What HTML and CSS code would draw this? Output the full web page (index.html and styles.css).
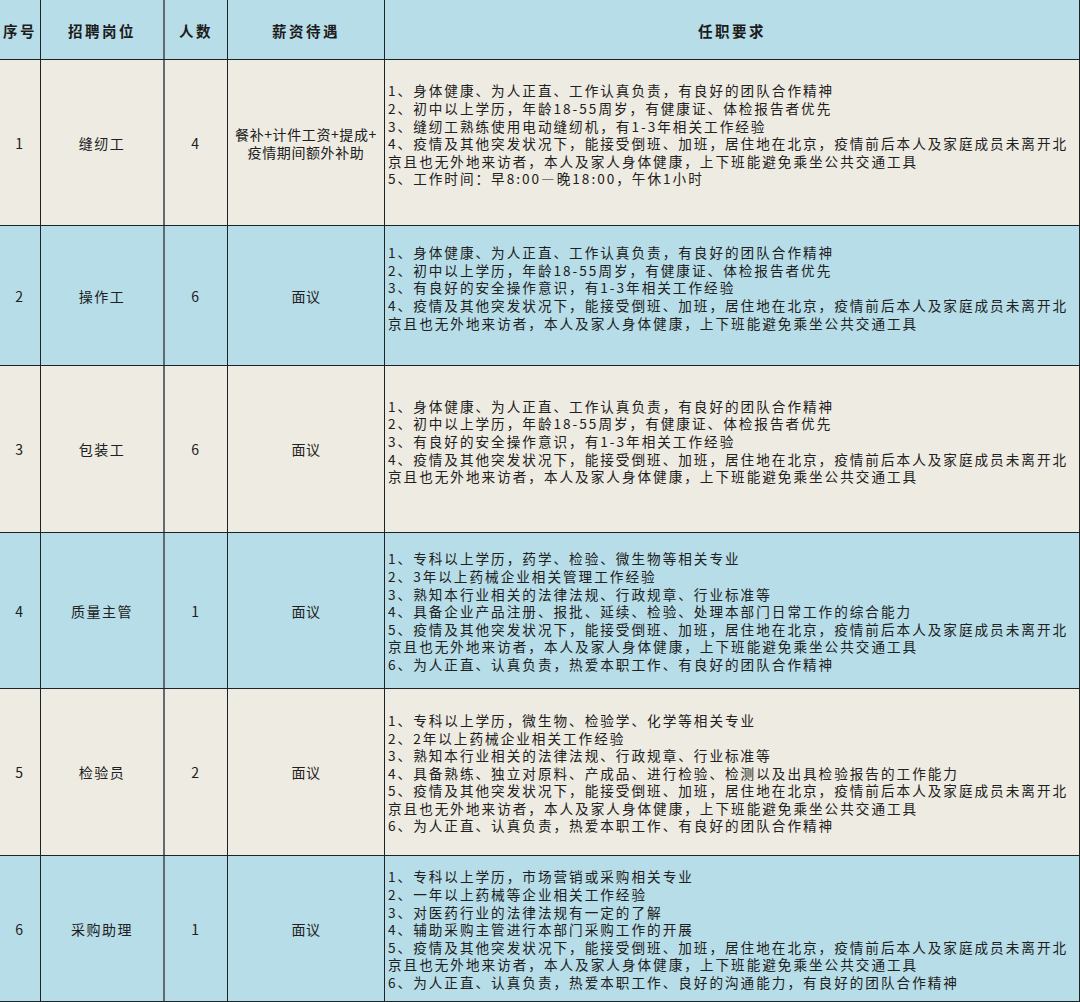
FILE: index.html
```
<!DOCTYPE html>
<html lang="zh">
<head>
<meta charset="utf-8">
<title>招聘岗位</title>
<link rel="stylesheet" href="styles.css">
</head>
<body>
<div class="sheet">
  <div class="row head">
    <div class="c c1">序号</div>
    <div class="c c2">招聘岗位</div>
    <div class="c c3">人数</div>
    <div class="c c4">薪资待遇</div>
    <div class="c c5">任职要求</div>
  </div>

  <div class="row beige h1">
    <div class="c c1">1</div>
    <div class="c c2">缝纫工</div>
    <div class="c c3">4</div>
    <div class="c c4"><div>餐补+计件工资+提成+</div><div>疫情期间额外补助</div></div>
    <div class="c c5">
      <div>1、身体健康、为人正直、工作认真负责，有良好的团队合作精神</div>
      <div>2、初中以上学历，年龄18-55周岁，有健康证、体检报告者优先</div>
      <div>3、缝纫工熟练使用电动缝纫机，有1-3年相关工作经验</div>
      <div>4、疫情及其他突发状况下，能接受倒班、加班，居住地在北京，疫情前后本人及家庭成员未离开北</div>
      <div>京且也无外地来访者，本人及家人身体健康，上下班能避免乘坐公共交通工具</div>
      <div>5、工作时间：早8:00—晚18:00，午休1小时</div>
      <div class="blank">&nbsp;</div>
    </div>
  </div>

  <div class="row blue h2">
    <div class="c c1">2</div>
    <div class="c c2">操作工</div>
    <div class="c c3">6</div>
    <div class="c c4">面议</div>
    <div class="c c5">
      <div>1、身体健康、为人正直、工作认真负责，有良好的团队合作精神</div>
      <div>2、初中以上学历，年龄18-55周岁，有健康证、体检报告者优先</div>
      <div>3、有良好的安全操作意识，有1-3年相关工作经验</div>
      <div>4、疫情及其他突发状况下，能接受倒班、加班，居住地在北京，疫情前后本人及家庭成员未离开北</div>
      <div>京且也无外地来访者，本人及家人身体健康，上下班能避免乘坐公共交通工具</div>
      <div class="blank">&nbsp;</div>
    </div>
  </div>

  <div class="row beige h3">
    <div class="c c1">3</div>
    <div class="c c2">包装工</div>
    <div class="c c3">6</div>
    <div class="c c4">面议</div>
    <div class="c c5">
      <div>1、身体健康、为人正直、工作认真负责，有良好的团队合作精神</div>
      <div>2、初中以上学历，年龄18-55周岁，有健康证、体检报告者优先</div>
      <div>3、有良好的安全操作意识，有1-3年相关工作经验</div>
      <div>4、疫情及其他突发状况下，能接受倒班、加班，居住地在北京，疫情前后本人及家庭成员未离开北</div>
      <div>京且也无外地来访者，本人及家人身体健康，上下班能避免乘坐公共交通工具</div>
      <div class="blank">&nbsp;</div>
    </div>
  </div>

  <div class="row blue h4">
    <div class="c c1">4</div>
    <div class="c c2">质量主管</div>
    <div class="c c3">1</div>
    <div class="c c4">面议</div>
    <div class="c c5">
      <div>1、专科以上学历，药学、检验、微生物等相关专业</div>
      <div>2、3年以上药械企业相关管理工作经验</div>
      <div>3、熟知本行业相关的法律法规、行政规章、行业标准等</div>
      <div>4、具备企业产品注册、报批、延续、检验、处理本部门日常工作的综合能力</div>
      <div>5、疫情及其他突发状况下，能接受倒班、加班，居住地在北京，疫情前后本人及家庭成员未离开北</div>
      <div>京且也无外地来访者，本人及家人身体健康，上下班能避免乘坐公共交通工具</div>
      <div>6、为人正直、认真负责，热爱本职工作、有良好的团队合作精神</div>
    </div>
  </div>

  <div class="row beige h5">
    <div class="c c1">5</div>
    <div class="c c2">检验员</div>
    <div class="c c3">2</div>
    <div class="c c4">面议</div>
    <div class="c c5">
      <div>1、专科以上学历，微生物、检验学、化学等相关专业</div>
      <div>2、2年以上药械企业相关工作经验</div>
      <div>3、熟知本行业相关的法律法规、行政规章、行业标准等</div>
      <div>4、具备熟练、独立对原料、产成品、进行检验、检测以及出具检验报告的工作能力</div>
      <div>5、疫情及其他突发状况下，能接受倒班、加班，居住地在北京，疫情前后本人及家庭成员未离开北</div>
      <div>京且也无外地来访者，本人及家人身体健康，上下班能避免乘坐公共交通工具</div>
      <div>6、为人正直、认真负责，热爱本职工作、有良好的团队合作精神</div>
    </div>
  </div>

  <div class="row blue h6">
    <div class="c c1">6</div>
    <div class="c c2">采购助理</div>
    <div class="c c3">1</div>
    <div class="c c4">面议</div>
    <div class="c c5">
      <div>1、专科以上学历，市场营销或采购相关专业</div>
      <div>2、一年以上药械等企业相关工作经验</div>
      <div>3、对医药行业的法律法规有一定的了解</div>
      <div>4、辅助采购主管进行本部门采购工作的开展</div>
      <div>5、疫情及其他突发状况下，能接受倒班、加班，居住地在北京，疫情前后本人及家庭成员未离开北</div>
      <div>京且也无外地来访者，本人及家人身体健康，上下班能避免乘坐公共交通工具</div>
      <div>6、为人正直、认真负责，热爱本职工作、良好的沟通能力，有良好的团队合作精神</div>
    </div>
  </div>
</div>
</body>
</html>
```

FILE: styles.css
```
* { box-sizing: border-box; }
html, body { margin: 0; padding: 0; background: #eeebe2; }
body {
  font-family: "Noto Sans CJK SC", "Liberation Sans", sans-serif;
  color: #202020;
  width: 1080px;
  height: 1002px;
  overflow: hidden;
}
.sheet {
  display: flex;
  flex-direction: column;
  width: 1080px;
}
.row {
  display: grid;
  grid-template-columns: 41px 124px 63px 157px 695px;
  border-bottom: 1px solid #1e2326;
}
.head { height: 60px; background: #b7dde8; }
.beige { background: #eeebe2; }
.blue { background: #b7dde8; }
.h1 { height: 166px; }
.h2 { height: 140px; }
.h3 { height: 167px; }
.h4 { height: 156px; }
.h5 { height: 167px; }
.h6 { height: 146px; }

.c {
  display: flex;
  flex-direction: column;
  justify-content: center;
  align-items: center;
  text-align: center;
  border-right: 1px solid #1e2326;
  font-size: 14px;
  line-height: 18px;
  letter-spacing: 1.5px;
  white-space: nowrap;
}
.c2 { border-right: 2px solid #5f6b70; }
.c5 {
  align-items: flex-start;
  text-align: left;
  padding-left: 3px;
  padding-top: 3px;
  font-size: 13.6px;
  line-height: 17.6px;
  letter-spacing: 2px;
}
.head .c {
  font-weight: 700;
  font-size: 14.5px;
  letter-spacing: 2.5px;
  color: #1c1c1c;
  padding-top: 2px;
}
.head .c5 { align-items: center; padding-left: 0; }
.c4 { letter-spacing: 0.6px; }
.head .c4 { letter-spacing: 2.5px; }
.blank { height: 17.6px; }
```
